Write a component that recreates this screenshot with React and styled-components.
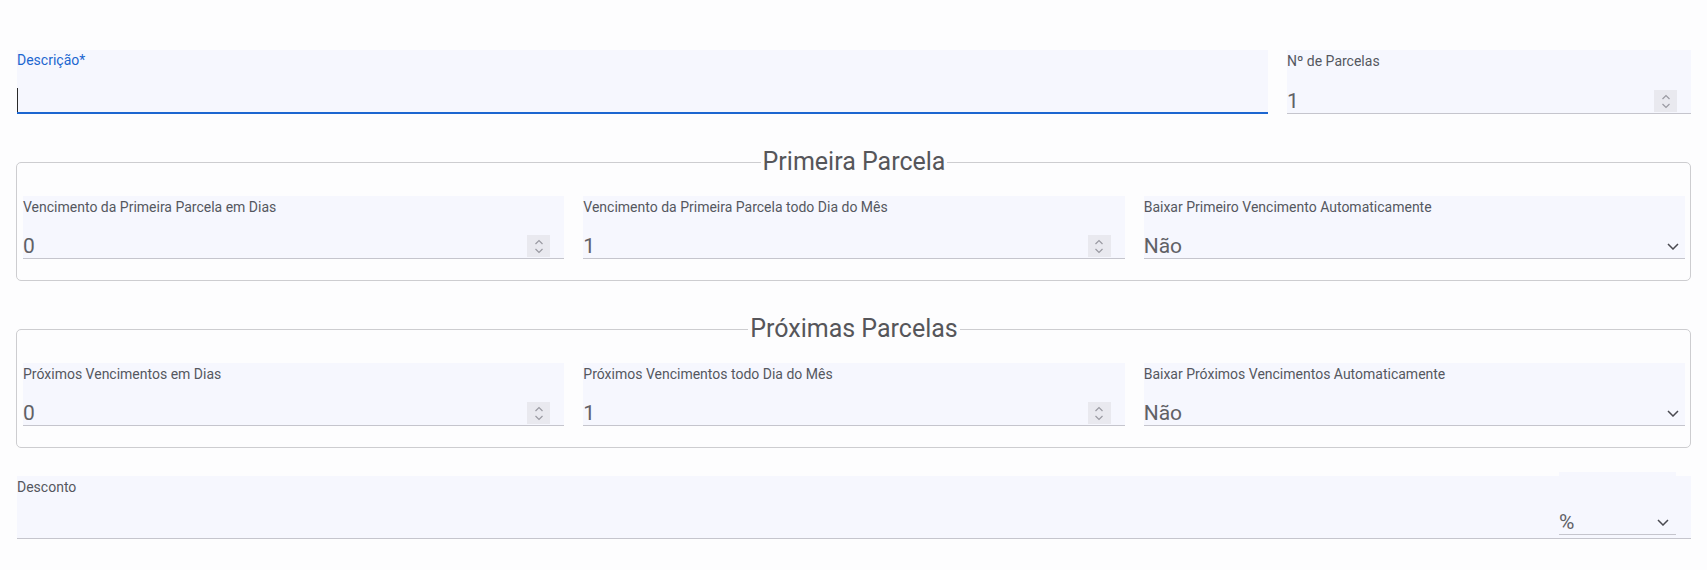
import React from "react";
import styled, { createGlobalStyle } from "styled-components";

const Global = createGlobalStyle`
  html, body { margin: 0; padding: 0; background: #fdfdfe; }
  body { font-family: Roboto, "Noto Sans", Arial, sans-serif; }
  * { box-sizing: border-box; }
`;

const Page = styled.form`
  width: 1707px;
  padding: 50px 16px 0 16px;
`;

const TopRow = styled.div`
  display: flex;
  gap: 19px;
  margin-left: 1px;
`;

const Field = styled.div`
  position: relative;
  flex: ${(p) => (p.$width ? `0 0 ${p.$width}px` : "1 1 auto")};
  min-width: 0;
  height: ${(p) => p.$h || 63}px;
  background: #f6f7fe;
  border-bottom: ${(p) => (p.$focused ? "2px solid #1c66d0" : "1px solid #c5c5cd")};
  display: flex;
  flex-direction: column;
  justify-content: space-between;
  padding-top: ${(p) => (p.$focused ? 2 : 3)}px;
`;

const Label = styled.label`
  font-size: 14px;
  line-height: 17px;
  color: ${(p) => (p.$focused ? "#1c66d0" : "#55575f")};
  white-space: nowrap;
`;

const ValueRow = styled.div`
  display: flex;
  align-items: center;
  height: 24px;
  padding-right: ${(p) => p.$pr ?? 14}px;
`;

const Value = styled.span`
  flex: 1;
  font-size: 21px;
  line-height: 24px;
  color: #616166;
`;

const Caret = styled.span`
  width: 1px;
  height: 24px;
  background: #2a2a2a;
`;

const SpinBox = styled.span`
  width: 23px;
  height: 22px;
  background: #e9e9ef;
  display: flex;
  align-items: center;
  justify-content: center;
`;

const Group = styled.fieldset`
  margin: ${(p) => p.$mt}px 0 0 0;
  border: 1px solid #cdcdd0;
  border-radius: 5px;
  padding: 20px 5px 21px 6px;
  min-width: 0;
`;

const Legend = styled.legend`
  margin: 0 auto;
  padding: 0 2px;
  font-size: 25px;
  line-height: 28px;
  color: #56565a;
`;

const Cols = styled.div`
  display: grid;
  grid-template-columns: repeat(3, 1fr);
  gap: 19px;
`;

const DiscountRow = styled.div`
  margin-top: 28px;
  margin-left: 1px;
  display: flex;
`;

const UnitSelect = styled.div`
  position: absolute;
  right: 15px;
  top: -4px;
  width: 117px;
  height: 63px;
  background: #f6f7fe;
  border-bottom: 1px solid #c5c5cd;
  display: flex;
  flex-direction: column;
  justify-content: flex-end;
`;

const Spinner = () => (
  <SpinBox>
    <svg width="10" height="15" viewBox="0 0 10 15" fill="none" stroke="#9a9aa2" strokeWidth="1.2">
      <polyline points="1.5,5 5,1.5 8.5,5" />
      <polyline points="1.5,10 5,13.5 8.5,10" />
    </svg>
  </SpinBox>
);

const Chevron = () => (
  <svg width="12" height="7" viewBox="0 0 12 7" fill="none" stroke="#4a4a50" strokeWidth="1.5">
    <polyline points="1,1 6,6 11,1" />
  </svg>
);

const NumberField = ({ label, value }) => (
  <Field>
    <Label>{label}</Label>
    <ValueRow>
      <Value>{value}</Value>
      <Spinner />
    </ValueRow>
  </Field>
);

const SelectField = ({ label, value }) => (
  <Field>
    <Label>{label}</Label>
    <ValueRow $pr={6}>
      <Value>{value}</Value>
      <Chevron />
    </ValueRow>
  </Field>
);

export default function App() {
  return (
    <>
      <Global />
      <Page>
        <TopRow>
          <Field $focused $h={64}>
            <Label $focused>Descrição*</Label>
            <ValueRow $pr={0}>
              <Caret />
            </ValueRow>
          </Field>
          <Field $width={404} $h={64}>
            <Label>Nº de Parcelas</Label>
            <ValueRow>
              <Value>1</Value>
              <Spinner />
            </ValueRow>
          </Field>
        </TopRow>

        <Group $mt={34}>
          <Legend>Primeira Parcela</Legend>
          <Cols>
            <NumberField label="Vencimento da Primeira Parcela em Dias" value="0" />
            <NumberField label="Vencimento da Primeira Parcela todo Dia do Mês" value="1" />
            <SelectField label="Baixar Primeiro Vencimento Automaticamente" value="Não" />
          </Cols>
        </Group>

        <Group $mt={34}>
          <Legend>Próximas Parcelas</Legend>
          <Cols>
            <NumberField label="Próximos Vencimentos em Dias" value="0" />
            <NumberField label="Próximos Vencimentos todo Dia do Mês" value="1" />
            <SelectField label="Baixar Próximos Vencimentos Automaticamente" value="Não" />
          </Cols>
        </Group>

        <DiscountRow>
          <Field $h={63}>
            <Label>Desconto</Label>
            <UnitSelect>
              <ValueRow $pr={7}>
                <Value>%</Value>
                <Chevron />
              </ValueRow>
            </UnitSelect>
          </Field>
        </DiscountRow>
      </Page>
    </>
  );
}
